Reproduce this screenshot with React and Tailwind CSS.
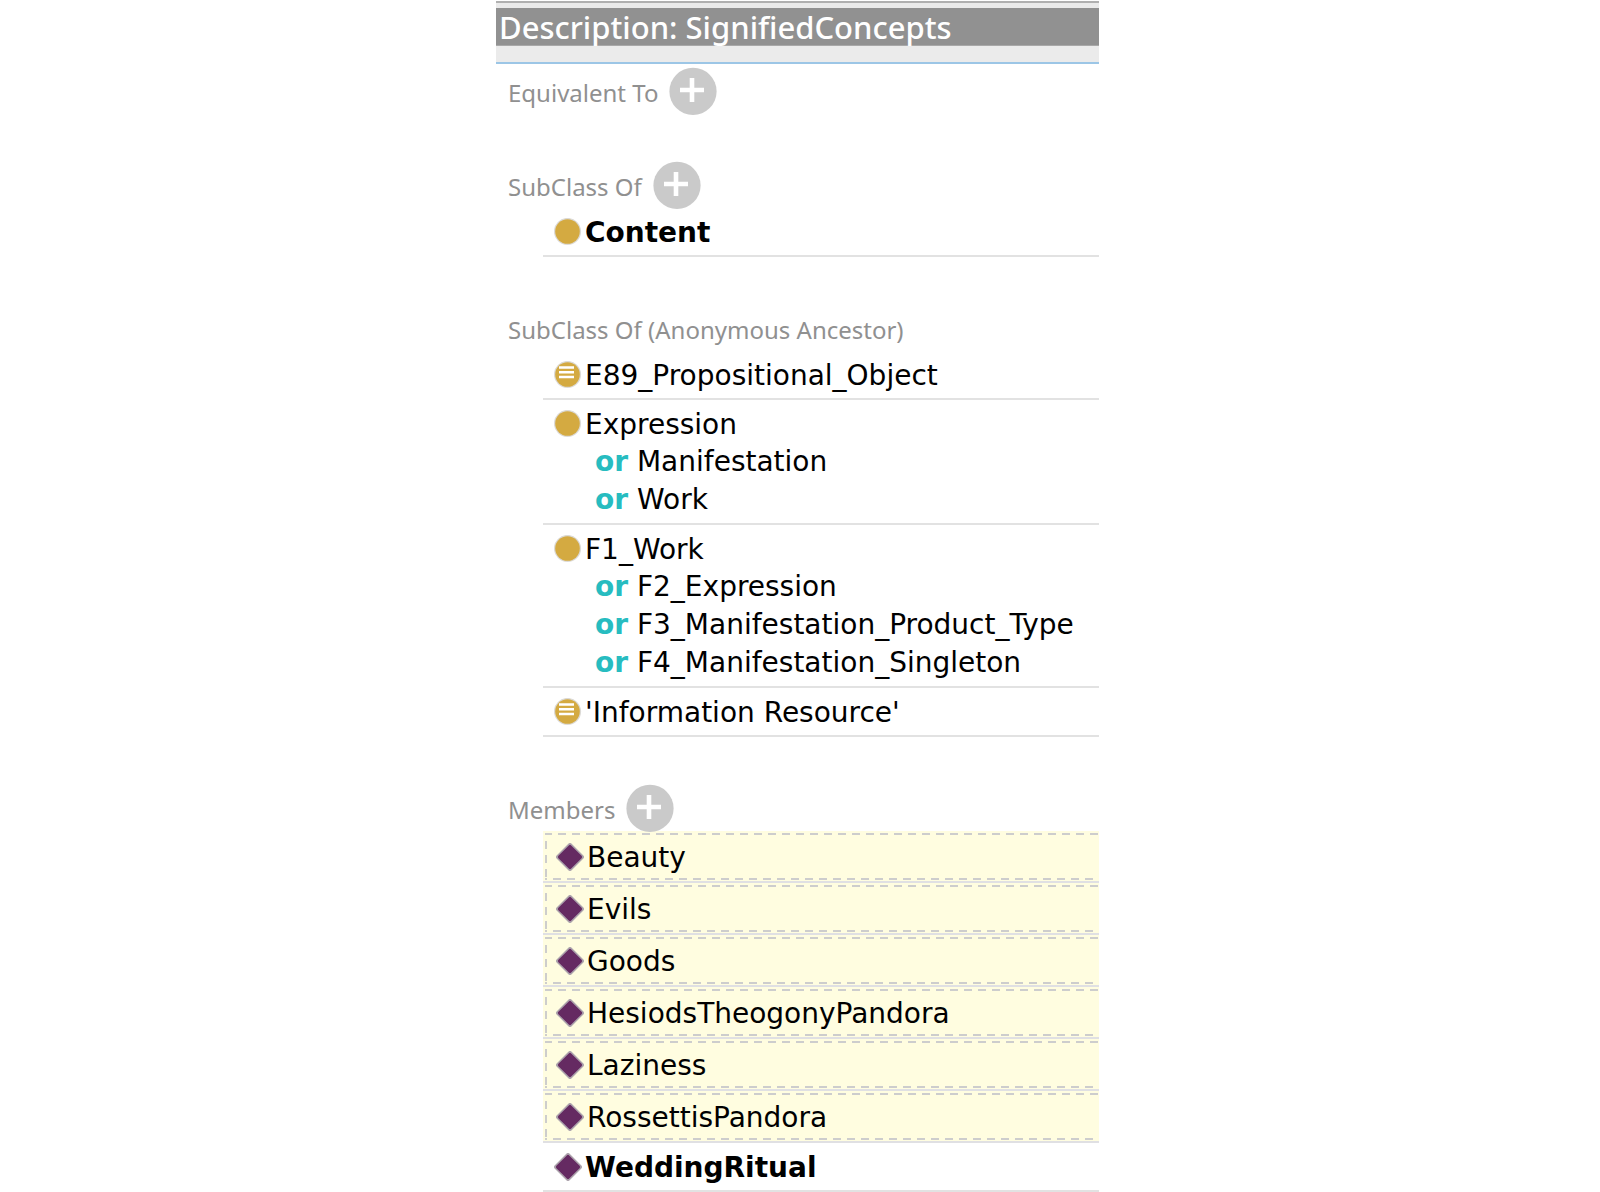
const ancestors = [
  { name: 'E89_Propositional_Object', defined: true },
  { name: 'Expression', or: ['Manifestation', 'Work'] },
  {
    name: 'F1_Work',
    or: ['F2_Expression', 'F3_Manifestation_Product_Type', 'F4_Manifestation_Singleton'],
  },
  { name: "'Information Resource'", defined: true },
];

const inferredMembers = [
  'Beauty',
  'Evils',
  'Goods',
  'HesiodsTheogonyPandora',
  'Laziness',
  'RossettisPandora',
];

function ClassIcon({ defined }) {
  return (
    <svg viewBox="0 0 28 28" className="size-7 shrink-0" aria-hidden="true">
      <circle cx="13.5" cy="13.5" r="13.6" fill="#dcdad6" />
      <circle cx="13.5" cy="13.5" r="12.3" fill="#d4aa41" />
      {defined && <path d="M5 6.4h15M5 11.2h15M5 16h15" stroke="#fff" strokeWidth="2.5" />}
    </svg>
  );
}

function IndividualIcon() {
  return (
    <svg viewBox="0 0 28 28" className="size-7 shrink-0" aria-hidden="true">
      <path
        d="M14 2 26 14 14 26 2 14Z"
        fill="#aca3ac"
        stroke="#aca3ac"
        strokeWidth="4"
        strokeLinejoin="round"
      />
      <path
        d="M14 3.6 24.4 14 14 24.4 3.6 14Z"
        fill="#652a62"
        stroke="#652a62"
        strokeWidth="3.4"
        strokeLinejoin="round"
      />
    </svg>
  );
}

function AddButton({ label }) {
  return (
    <button type="button" aria-label={label} className="size-12 shrink-0 rounded-full">
      <svg viewBox="0 0 48 48" className="size-12" aria-hidden="true">
        <circle cx="24" cy="24.4" r="23.6" fill="#cacaca" />
        <path d="M11 23h24M23 11v24" stroke="#fff" strokeWidth="4.6" />
      </svg>
    </button>
  );
}

function SectionHeader({ title, add }) {
  return (
    <div className="flex h-[46px] items-center gap-[11px] pl-3">
      <h2 className="pt-[3px] text-[24px] leading-8 text-[#909090]">{title}</h2>
      {add && <AddButton label={`Add ${title}`} />}
    </div>
  );
}

function Row({ icon, name, bold, or }) {
  return (
    <li className="border-b-2 border-[#e2e2e2] pt-[5px] pb-1 pl-[11px]">
      <div className="flex h-[38px] items-center gap-[3px]">
        {icon}
        <span className={bold ? 'pt-[2px] font-bold' : 'pt-[2px]'}>{name}</span>
      </div>
      {or?.map((operand) => (
        <div key={operand} className="pl-[41px]">
          <b className="text-[#27bcc0]">or</b> {operand}
        </div>
      ))}
    </li>
  );
}

function InferredRow({ name }) {
  return (
    <li className="border-b-2 border-[#e0e0e3] bg-[#fffde0] pt-[2px] pb-px pl-[2px]">
      <div className="flex h-[47px] items-center gap-[3px] bg-[linear-gradient(90deg,#cdcdcd_8px,transparent_8px),linear-gradient(90deg,#cdcdcd_8px,transparent_8px),linear-gradient(180deg,#cdcdcd_8px,transparent_8px)] bg-[length:14px_2px,14px_2px,2px_14px] bg-[position:13px_0,8px_100%,0_8px] pl-[11px] [background-repeat:repeat-x,repeat-x,repeat-y]">
        <IndividualIcon />
        <span className="pt-[2px]">{name}</span>
      </div>
    </li>
  );
}

export default function App() {
  return (
    <div className="grid min-h-screen grid-cols-[496fr_603fr_501fr] bg-white">
      <main className="col-start-2 min-w-0 pt-px whitespace-nowrap">
        <header className="border-b-2 border-[#9cc6e6] bg-[#ebebeb]">
          <div className="border-t-2 border-[#b0b0b0] pt-[5px] pb-4">
            <h1 className="h-[38px] border-b border-[#a8a8a8] bg-[#919191] pl-[3px] font-['Noto_Sans'] text-[31px] leading-[38px] font-medium text-white">
              Description: SignifiedConcepts
            </h1>
          </div>
        </header>

        <div className="flex flex-col gap-12 pt-1 font-['Noto_Sans']">
          <section>
            <SectionHeader title="Equivalent To" add />
          </section>

          <section>
            <SectionHeader title="SubClass Of" add />
            <ul className="ml-[47px] font-['DejaVu_Sans'] text-[28px] leading-[38px] text-black">
              <Row icon={<ClassIcon />} name="Content" bold />
            </ul>
          </section>

          <section>
            <SectionHeader title="SubClass Of (Anonymous Ancestor)" />
            <ul className="ml-[47px] font-['DejaVu_Sans'] text-[28px] leading-[38px] text-black">
              {ancestors.map((item) => (
                <Row
                  key={item.name}
                  icon={<ClassIcon defined={item.defined} />}
                  name={item.name}
                  or={item.or}
                />
              ))}
            </ul>
          </section>

          <section>
            <SectionHeader title="Members" add />
            <ul className="ml-[47px] font-['DejaVu_Sans'] text-[28px] leading-[38px] text-black">
              {inferredMembers.map((name) => (
                <InferredRow key={name} name={name} />
              ))}
              <Row icon={<IndividualIcon />} name="WeddingRitual" bold />
            </ul>
          </section>
        </div>
      </main>
    </div>
  );
}
